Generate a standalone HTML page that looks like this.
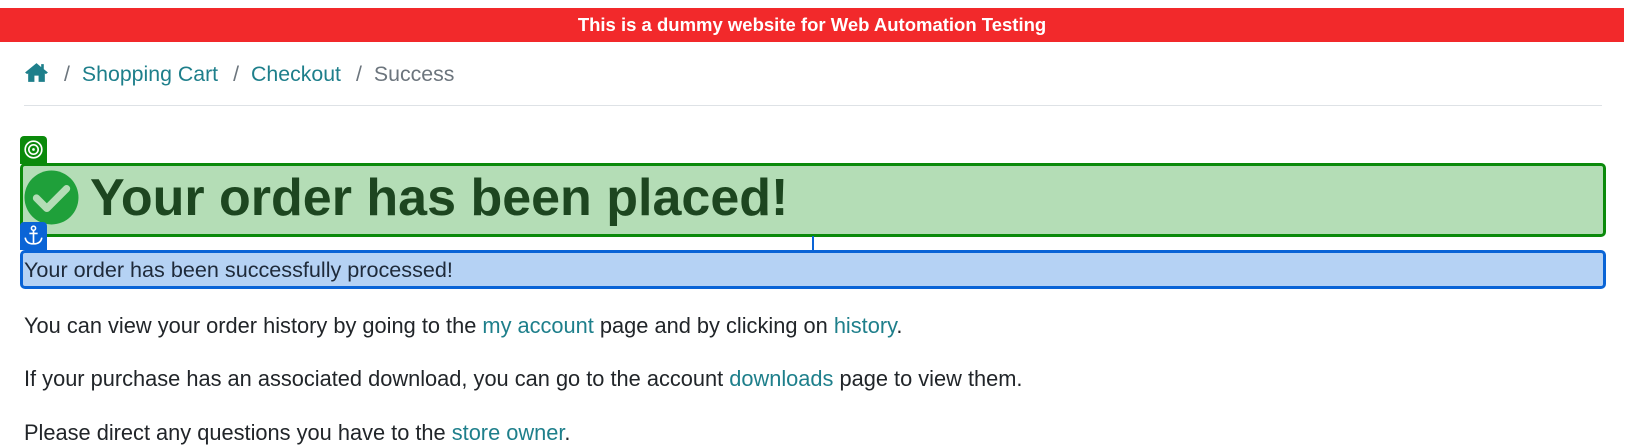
<!DOCTYPE html>
<html><head><meta charset="utf-8"><style>
body{margin:0;width:1626px;height:433px;overflow:hidden;background:#fff;font-family:"Liberation Sans",sans-serif;color:#212529;position:relative}
.top{position:absolute;top:8px;left:0;width:1624px;height:34px;background:#f2292b;color:#fff;font-weight:bold;font-size:18.5px;text-align:center;line-height:34px}
.bc{position:absolute;top:61px;left:24px;font-size:21.3px;line-height:26px;color:#6c757d;white-space:nowrap}
.bc a{color:#1e7f8b;text-decoration:none}
.bc .s{margin:0 12px 0 15px}
.hr{position:absolute;top:105px;left:24px;width:1578px;height:1px;background:#dee2e6}
.gt{position:absolute;left:20px;top:136px;width:27px;height:28px;background:#0b8a0b;border-radius:4px 4px 0 0}
.gb{position:absolute;left:20px;top:163px;width:1580px;height:68px;border:3px solid #0b8a0b;background:#b4ddb6;border-radius:5px}
.h{position:absolute;left:90px;top:167px;font-size:52px;font-weight:bold;color:#1d4620;line-height:62px}
.bt{position:absolute;left:20px;top:222px;width:27px;height:28px;background:#0a64d6;border-radius:4px 4px 0 0}
.bl{position:absolute;left:812px;top:236px;width:2px;height:14px;background:#0a64d6}
.bb{position:absolute;left:20px;top:250px;width:1580px;height:33px;border:3px solid #0a64d6;background:#b5d2f4;border-radius:5px}
.bb span{position:absolute;left:1px;top:4px;font-size:21.6px;line-height:26px;color:#1e2a3a}
p{position:absolute;left:24px;margin:0;font-size:21.8px;line-height:26px}
p a{color:#1e7f8b;text-decoration:none}
</style></head><body>
<div class="top">This is a dummy website for Web Automation Testing</div>
<div class="bc"><svg width="25" height="21" viewBox="0 0 24 20" style="vertical-align:-2px"><path d="M12 1 L1 10 L3 11.5 L4 10.8 V19 H10 V13 H14 V19 H20 V10.8 L21 11.5 L23 10 L19 6.8 V2 H16.5 V4.8 Z" fill="#1e7f8b"/></svg><span class="s">/</span><a>Shopping Cart</a><span class="s">/</span><a>Checkout</a><span class="s">/</span>Success</div>
<div class="hr"></div>
<div class="gt"><svg width="27" height="27" viewBox="0 0 26 26"><circle cx="13" cy="13" r="8" fill="none" stroke="#fff" stroke-width="1.6"/><circle cx="13" cy="13" r="4.5" fill="none" stroke="#fff" stroke-width="1.6"/><circle cx="13" cy="13" r="1.3" fill="#fff"/></svg></div>
<div class="gb"></div>
<svg style="position:absolute;left:24px;top:170px" width="55" height="55" viewBox="0 0 53 53"><circle cx="26.5" cy="26.5" r="26" fill="#1fa03a"/><path d="M12 27 L22 37 L41 18" fill="none" stroke="#b4ddb6" stroke-width="7" stroke-linecap="round" stroke-linejoin="round"/></svg>
<div class="h">Your order has been placed!</div>
<div class="bl"></div>
<div class="bb"><span>Your order has been successfully processed!</span></div>
<div class="bt"><svg width="27" height="27" viewBox="0 0 26 26"><circle cx="13" cy="6" r="2" fill="none" stroke="#fff" stroke-width="1.5"/><path d="M13 8 V21 M9 11 H17 M5 15 Q6 21 13 21 Q20 21 21 15" fill="none" stroke="#fff" stroke-width="1.6"/></svg></div>
<p style="top:313px">You can view your order history by going to the <a>my account</a> page and by clicking on <a>history</a>.</p>
<p style="top:366px">If your purchase has an associated download, you can go to the account <a>downloads</a> page to view them.</p>
<p style="top:420px">Please direct any questions you have to the <a>store owner</a>.</p>
</body></html>
